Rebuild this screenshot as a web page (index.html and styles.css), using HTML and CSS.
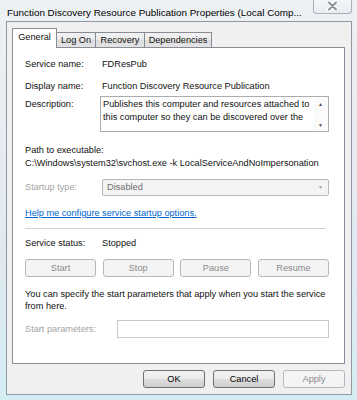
FILE: index.html
```html
<!DOCTYPE html>
<html>
<head>
<meta charset="utf-8">
<link rel="stylesheet" href="styles.css">
</head>
<body>
<div class="frame">
  <div class="titlebar">
    <span class="title">Function Discovery Resource Publication Properties (Local Comp...</span>
    <div class="close">
      <svg width="11" height="10" viewBox="0 0 11 10">
        <path d="M2 1.5 L9 8.5 M9 1.5 L2 8.5" stroke="#ffffff" stroke-width="4" stroke-linecap="round"/>
        <path d="M2 1.5 L9 8.5 M9 1.5 L2 8.5" stroke="#8c9198" stroke-width="2" stroke-linecap="round"/>
      </svg>
    </div>
  </div>
  <div class="window">
    <div class="tabs">
      <div class="tab active">General</div>
      <div class="tab">Log On</div>
      <div class="tab">Recovery</div>
      <div class="tab">Dependencies</div>
    </div>
    <div class="panel">
      <div class="row r-service"><span class="lbl">Service name:</span><span>FDResPub</span></div>
      <div class="row r-display"><span class="lbl">Display name:</span><span>Function Discovery Resource Publication</span></div>
      <div class="row r-desc">
        <span class="lbl lbl-desc">Description:</span>
        <div class="descbox">
          <div class="desctext">Publishes this computer and resources attached to<br>this computer so they can be discovered over the</div>
          <div class="vscroll"><span class="arr">&#9650;</span><span class="arr">&#9660;</span></div>
        </div>
      </div>
      <div class="pathlbl">Path to executable:</div>
      <div class="path">C:\Windows\system32\svchost.exe -k LocalServiceAndNoImpersonation</div>
      <div class="row r-startup">
        <span class="lbl disabled">Startup type:</span>
        <div class="combo"><span>Disabled</span><span class="carr">&#9660;</span></div>
      </div>
      <a class="help">Help me configure service startup options.</a>
      <div class="sep"></div>
      <div class="row r-status"><span class="lbl">Service status:</span><span>Stopped</span></div>
      <div class="svcbtns">
        <div class="btn dis">Start</div>
        <div class="btn dis">Stop</div>
        <div class="btn dis">Pause</div>
        <div class="btn dis">Resume</div>
      </div>
      <div class="note">You can specify the start parameters that apply when you start the service<br>from here.</div>
      <div class="row r-params">
        <span class="lbl lbl-params disabled">Start parameters:</span>
        <div class="input"></div>
      </div>
    </div>
    <div class="footer">
      <div class="btn std">OK</div>
      <div class="btn std">Cancel</div>
      <div class="btn dis apply">Apply</div>
    </div>
  </div>
</div>
</body>
</html>
```
FILE: styles.css
```css
html, body {
  margin: 0;
  padding: 0;
}
body {
  width: 357px;
  height: 400px;
  overflow: hidden;
  background: linear-gradient(180deg, #eef1f4 0%, #e2e9f0 60%, #d4ecf3 100%);
  font-family: "Liberation Sans", Arial, sans-serif;
  font-size: 9.2px;
  color: #111;
}
.frame {
  display: flex;
  flex-direction: column;
  height: 400px;
  padding-left: 6px;
  box-sizing: border-box;
}
.titlebar {
  height: 21px;
  display: flex;
  justify-content: space-between;
  align-items: flex-start;
  flex: none;
}
.title {
  font-size: 9.9px;
  line-height: 13px;
  padding-top: 6px;
  margin-left: 1px;
  color: #000;
  white-space: nowrap;
}
.close {
  width: 39px;
  height: 15px;
  margin-right: 5px;
  margin-top: -1px;
  box-sizing: border-box;
  border: 1px solid #a8b0ba;
  border-top: none;
  border-radius: 0 0 4px 4px;
  background: linear-gradient(180deg, #f4f6f8 0%, #e9edf1 100%);
  display: flex;
  align-items: center;
  justify-content: center;
}
.window {
  width: 346px;
  height: 374px;
  box-sizing: border-box;
  border: 1px solid #8f99a3;
  background: #f0f0f0;
  display: flex;
  flex-direction: column;
  flex: none;
}
.tabs {
  display: flex;
  align-items: flex-end;
  height: 19px;
  margin-top: 6px;
  padding-left: 5px;
  flex: none;
}
.tab {
  height: 15px;
  box-sizing: border-box;
  border: 1px solid #898c95;
  border-bottom: none;
  border-left: none;
  background: linear-gradient(180deg, #f2f2f2 0%, #ebebeb 50%, #dddddd 51%, #e3e3e3 100%);
  padding: 0 5px;
  line-height: 14px;
  white-space: nowrap;
  color: #111;
}
.tab:nth-child(2) { width: 39px; text-align: center; padding: 0; }
.tab:nth-child(3) { width: 49px; text-align: center; padding: 0; }
.tab:nth-child(4) { width: 67px; text-align: center; padding: 0; }
.tab.active {
  position: relative;
  z-index: 1;
  width: 45px;
  height: 20px;
  margin-bottom: -1px;
  border-left: 1px solid #898c95;
  background: #ffffff;
  text-align: center;
  padding: 0;
  line-height: 17px;
}
.panel {
  flex: none;
  height: 317px;
  margin: 0 6px 0 5px;
  box-sizing: border-box;
  border: 1px solid #898c95;
  background: #fff;
  padding: 10px 15px 0 12px;
  display: flex;
  flex-direction: column;
}
.row {
  display: flex;
  align-items: flex-start;
  line-height: 13px;
  white-space: nowrap;
}
.lbl {
  width: 77px;
  flex: none;
}
.disabled { color: #a3a3a3; }
.r-display { margin-top: 9px; }
.r-desc { margin-top: 3px; }
.lbl-desc { width: 75px; margin-top: 2px; }
.descbox {
  width: 229px;
  height: 36px;
  box-sizing: border-box;
  border: 1px solid #abadb3;
  display: flex;
  overflow: hidden;
}
.desctext {
  flex: 1;
  padding: 1px 0 0 2px;
  line-height: 13px;
}
.vscroll {
  width: 15px;
  display: flex;
  flex-direction: column;
  justify-content: space-between;
  align-items: center;
  padding: 4px 0 3px;
  background: #fbfbfb;
}
.arr {
  font-size: 5px;
  line-height: 6px;
  color: #4d4d4d;
}
.pathlbl { margin-top: 12px; line-height: 13px; }
.path { line-height: 13px; white-space: nowrap; }
.r-startup { margin-top: 9px; align-items: center; }
.combo {
  width: 228px;
  height: 17px;
  box-sizing: border-box;
  border: 1px solid #b6b9bd;
  border-radius: 2px;
  background: #f4f4f4;
  display: flex;
  justify-content: space-between;
  align-items: center;
  padding: 0 5px 0 4px;
  color: #6d6d6d;
}
.carr { font-size: 5px; color: #9c9c9c; }
.help {
  margin-top: 11px;
  line-height: 13px;
  color: #0066cc;
  text-decoration: underline;
  align-self: flex-start;
}
.sep {
  margin-top: 8px;
  width: 301px;
  height: 0;
  border-top: 1px solid #cfcfcf;
}
.r-status { margin-top: 8px; }
.svcbtns {
  margin-top: 9px;
  width: 304px;
  display: flex;
  justify-content: space-between;
}
.btn {
  height: 18px;
  box-sizing: border-box;
  border-radius: 3px;
  display: flex;
  align-items: center;
  justify-content: center;
}
.svcbtns .btn { width: 71px; }
.dis {
  border: 1px solid #b5b9bc;
  background: #f4f4f4;
  color: #8a8a8a;
}
.std {
  border: 1px solid #707070;
  background: linear-gradient(180deg, #f2f2f2 0%, #ebebeb 48%, #dddddd 52%, #cfcfcf 100%);
  color: #000;
}
.note {
  margin-top: 11px;
  line-height: 12px;
  white-space: nowrap;
}
.r-params { margin-top: 8px; align-items: center; }
.lbl-params { width: 92px; }
.input {
  width: 212px;
  height: 18px;
  box-sizing: border-box;
  border: 1px solid #c6c8cc;
  background: #fff;
}
.footer {
  display: flex;
  justify-content: flex-end;
  gap: 8px;
  margin-top: 6px;
  padding-right: 6px;
}
.footer .btn { width: 62px; }
```
